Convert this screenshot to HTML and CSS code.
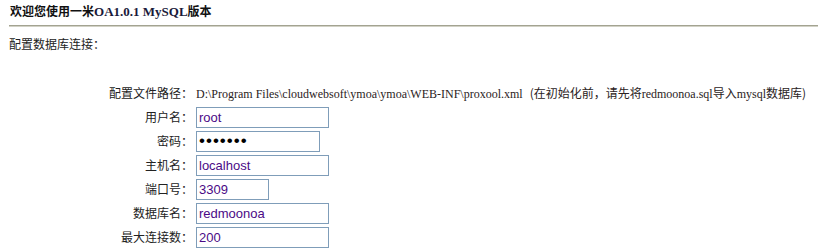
FILE: index.html
```html
<!DOCTYPE html>
<html lang="zh-CN">
<head>
<meta charset="utf-8">
<title>一米OA 安装</title>
<link rel="stylesheet" href="styles.css">
</head>
<body>
<div class="title">欢迎您使用一米<span class="latin">OA1.0.1 MySQL</span>版本</div>
<div class="rule"></div>
<div class="section">配置数据库连接：</div>
<div class="form">
  <div class="label">配置文件路径：</div>
  <div class="value path"><span class="latin">D:\Program Files\cloudwebsoft\ymoa\ymoa\WEB-INF\proxool.xml</span><span class="note">(在初始化前，请先将<span class="latin">redmoonoa.sql</span>导入<span class="latin">mysql</span>数据库)</span></div>

  <div class="label">用户名：</div>
  <div class="value"><input class="field w-wide" type="text" value="root"></div>

  <div class="label">密码：</div>
  <div class="value"><input class="field w-pwd pwd" type="password" value="1234567"></div>

  <div class="label">主机名：</div>
  <div class="value"><input class="field w-wide" type="text" value="localhost"></div>

  <div class="label">端口号：</div>
  <div class="value"><input class="field w-port" type="text" value="3309"></div>

  <div class="label">数据库名：</div>
  <div class="value"><input class="field w-wide" type="text" value="redmoonoa"></div>

  <div class="label">最大连接数：</div>
  <div class="value"><input class="field w-wide" type="text" value="200"></div>
</div>
</body>
</html>
```

FILE: styles.css
```css
html, body {
  margin: 0;
  padding: 0;
  background: #ffffff;
}
body {
  font-family: "Noto Sans CJK SC", "Liberation Sans", sans-serif;
  font-size: 12px;
  color: #222222;
}
.latin {
  font-family: "Liberation Serif", "Noto Sans CJK SC", serif;
}
.title {
  font-weight: bold;
  font-size: 12px;
  line-height: 16px;
  padding: 3px 0 0 10px;
  height: 19px;
  color: #111111;
}
.title .latin {
  font-size: 13px;
  color: #1a1a3a;
}
.rule {
  margin: 3px 0 0 9px;
  height: 1px;
  background: #a3a391;
  border-bottom: 1px solid #d2d2c6;
}
.section {
  padding: 9px 0 0 9px;
  line-height: 16px;
  height: 16px;
}
.form {
  margin-top: 29px;
  display: grid;
  grid-template-columns: 193px auto;
  grid-auto-rows: 24px;
  column-gap: 3px;
  align-items: center;
}
.label {
  text-align: right;
  line-height: 16px;
  color: #222222;
}
.path {
  white-space: nowrap;
  color: #2a2222;
  line-height: 16px;
}
.path .latin {
  font-size: 12px;
}
.note {
  margin-left: 7px;
}
.field {
  box-sizing: border-box;
  height: 21px;
  margin: 0;
  padding: 0 2px;
  border: 1px solid #7f9db9;
  font-family: "Liberation Sans", Arial, sans-serif;
  font-size: 13px;
  color: #4b0a86;
  background: #ffffff;
  outline: none;
  display: block;
}
.pwd {
  color: #000000;
  font-size: 17px;
  letter-spacing: 1px;
}
.w-wide { width: 133px; }
.w-pwd { width: 124px; }
.w-port { width: 73px; }
```
